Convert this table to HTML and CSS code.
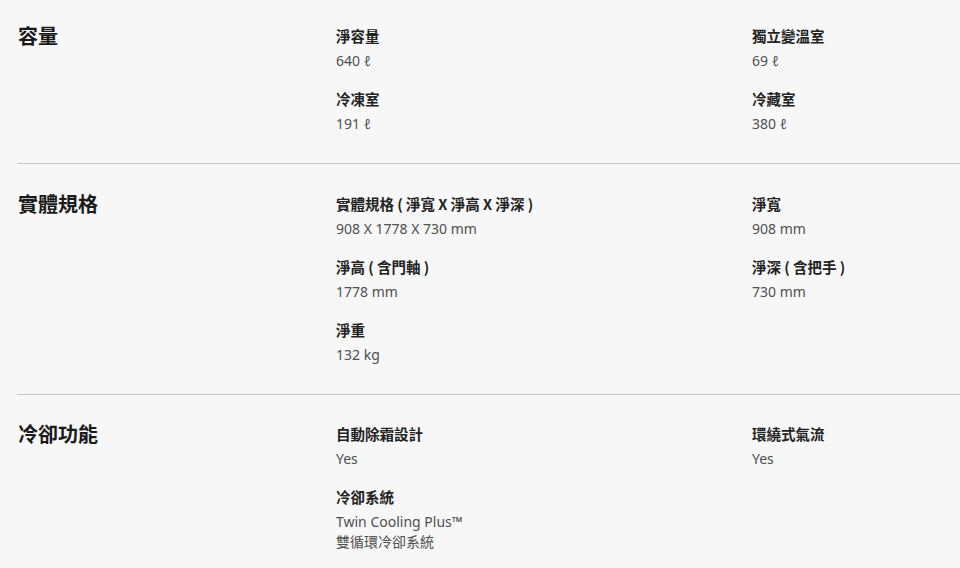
FILE: index.html
```html
<!DOCTYPE html>
<html lang="zh-Hant">
<head>
<meta charset="utf-8">
<link rel="stylesheet" href="styles.css">
</head>
<body>
<div class="specs">
  <section class="spec">
    <h2 class="spec-title">容量</h2>
    <div class="spec-items">
      <div class="item"><div class="label">淨容量</div><div class="value">640 ℓ</div></div>
      <div class="item"><div class="label">獨立變溫室</div><div class="value">69 ℓ</div></div>
      <div class="item"><div class="label">冷凍室</div><div class="value">191 ℓ</div></div>
      <div class="item"><div class="label">冷藏室</div><div class="value">380 ℓ</div></div>
    </div>
  </section>
  <section class="spec">
    <h2 class="spec-title">實體規格</h2>
    <div class="spec-items">
      <div class="item"><div class="label">實體規格 ( 淨寬 X 淨高 X 淨深 )</div><div class="value">908 X 1778 X 730 mm</div></div>
      <div class="item"><div class="label">淨寬</div><div class="value">908 mm</div></div>
      <div class="item"><div class="label">淨高 ( 含門軸 )</div><div class="value">1778 mm</div></div>
      <div class="item"><div class="label">淨深 ( 含把手 )</div><div class="value">730 mm</div></div>
      <div class="item"><div class="label">淨重</div><div class="value">132 kg</div></div>
    </div>
  </section>
  <section class="spec">
    <h2 class="spec-title">冷卻功能</h2>
    <div class="spec-items">
      <div class="item"><div class="label">自動除霜設計</div><div class="value">Yes</div></div>
      <div class="item"><div class="label">環繞式氣流</div><div class="value">Yes</div></div>
      <div class="item"><div class="label">冷卻系統</div><div class="value">Twin Cooling Plus™<br>雙循環冷卻系統</div></div>
    </div>
  </section>
</div>
</body>
</html>
```
FILE: styles.css
```css
html, body {
  margin: 0;
  padding: 0;
  background: #f7f7f7;
}
body {
  font-family: "Noto Sans", "Noto Sans CJK TC", sans-serif;
  color: #1c1c1c;
  height: 568px;
  overflow: hidden;
}
.specs {
  padding-left: 17px;
}
.spec {
  display: grid;
  grid-template-columns: 319px 1fr;
  padding: 28px 0 29px;
  border-bottom: 1px solid #c6c6c6;
}
.spec:first-child {
  padding-top: 24px;
}
.spec:last-child {
  padding-top: 27px;
  border-bottom: none;
}
.spec-title {
  margin: 0;
  padding-left: 1px;
  font-size: 20px;
  line-height: 24px;
  font-weight: 700;
  font-family: "Noto Sans CJK TC", sans-serif;
  color: #1a1a1a;
}
.spec-items {
  display: grid;
  grid-template-columns: 416px 1fr;
  row-gap: 16px;
}
.label {
  font-family: "Noto Sans CJK TC", sans-serif;
  font-size: 14.5px;
  line-height: 24px;
  font-weight: 700;
  color: #222;
}
.value {
  padding-top: 3px;
  font-family: "Noto Sans", "Noto Sans CJK TC", sans-serif;
  font-size: 14px;
  line-height: 20px;
  color: #4f4f4f;
}
```
